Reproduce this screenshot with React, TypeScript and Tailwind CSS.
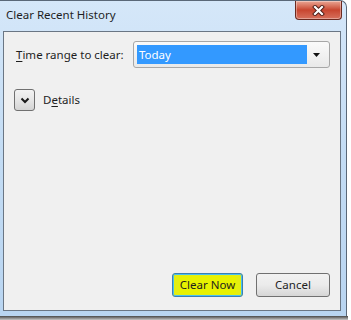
import React from 'react';

const font = { fontFamily: '"Noto Sans", "Open Sans", sans-serif' };

function CloseButton() {
  return (
    <div className="mr-[4px] flex h-[19px] w-[47px] items-center justify-center rounded-b-[4px] border border-t-0 border-[#6b2a20] bg-gradient-to-b from-[#e9a594] via-[#c8452f] to-[#d6705c] shadow-[inset_0_0_0_1px_rgba(255,255,255,0.35)]">
      <svg width="13" height="11" viewBox="0 0 13 11">
        <path d="M3 2 L10 9 M10 2 L3 9" stroke="#4a1a14" strokeWidth="4" strokeLinecap="square" />
        <path d="M3 2 L10 9 M10 2 L3 9" stroke="#ffffff" strokeWidth="2.2" strokeLinecap="square" />
      </svg>
    </div>
  );
}

function Chevron() {
  return (
    <svg width="10" height="7" viewBox="0 0 10 7">
      <path d="M1.5 1.5 L5 5 L8.5 1.5" stroke="#1a1a1a" strokeWidth="2" fill="none" />
    </svg>
  );
}

export default function App() {
  return (
    <div className="flex h-[320px] w-[351px] flex-col overflow-hidden bg-white text-[11.5px] text-[#1e1e1e]" style={font}>
      <div className="flex h-[316px]">
        {/* window frame */}
        <div className="flex w-[347px] flex-col rounded-tr-[7px] border-r border-t border-[#5a6878] bg-gradient-to-b from-[#d5e7f9] via-[#c3dcf4] to-[#b9d5f1] pb-[5px] pl-[3px] pr-[5px]">
          <div className="-mr-[5px] flex h-[30px] items-start justify-between">
            <span className="ml-[3px] mt-[6px] leading-[16px]">Clear Recent History</span>
            <CloseButton />
          </div>
          {/* client area */}
          <div className="flex flex-1 flex-col border border-[#6a7684] bg-[#f0f0f0]">
            <div className="mt-[9px] flex items-center">
              <span className="ml-[12px] w-[117px]">
                <span className="underline underline-offset-2">T</span>ime range to clear:
              </span>
              <div className="flex h-[27px] w-[197px] items-center rounded-[3px] border border-[#a7a7a7] bg-gradient-to-b from-[#fafafa] to-[#e9e9e9] p-[3px]">
                <div className="flex h-[19px] flex-1 items-center bg-[#3399ff] pl-[2px] text-white">Today</div>
                <div className="flex w-[19px] justify-center">
                  <svg width="7" height="4" viewBox="0 0 7 4">
                    <path d="M0 0 H7 L3.5 4 Z" fill="#111" />
                  </svg>
                </div>
              </div>
            </div>
            <div className="ml-[10px] mt-[21px] flex items-center">
              <div className="flex h-[22px] w-[21px] items-center justify-center rounded-[3px] border border-[#707070] bg-gradient-to-b from-[#f3f3f3] via-[#e6e6e6] to-[#d4d4d4]">
                <Chevron />
              </div>
              <span className="ml-[8px]">
                D<span className="underline underline-offset-2">e</span>tails
              </span>
            </div>
            <div className="flex-1" />
            <div className="mb-[13px] mr-[10px] flex justify-end gap-[13px]">
              <div className="flex h-[24px] w-[71px] items-center justify-center rounded-[3px] border border-[#3c7fb1] bg-[#e4ee10] shadow-[inset_0_0_0_1px_#48c0f0]">
                <span className="rounded-[2px] bg-[#e8f200] px-[1px]">Clear Now</span>
              </div>
              <div className="flex h-[24px] w-[74px] items-center justify-center rounded-[3px] border border-[#707070] bg-gradient-to-b from-[#f2f2f2] via-[#ebebeb] to-[#d6d6d6]">
                Cancel
              </div>
            </div>
          </div>
        </div>
        <div className="flex-1 bg-white" />
      </div>
      <div className="h-[4px] w-[348px] bg-gradient-to-b from-[#4a4a4a] to-[#c8c8c8]" />
    </div>
  );
}
